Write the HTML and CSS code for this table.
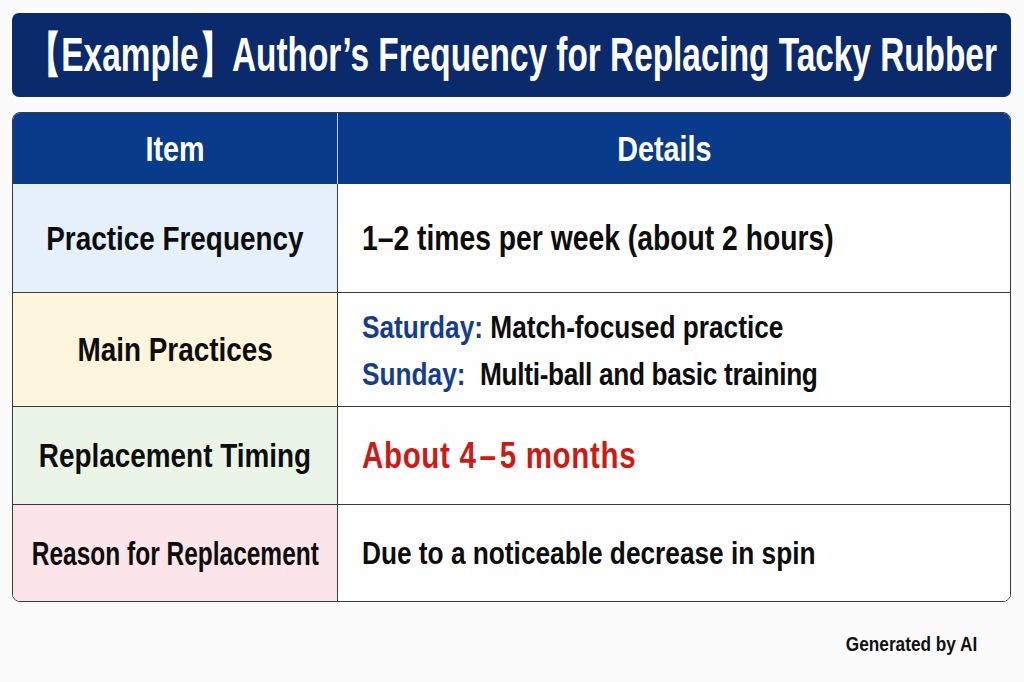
FILE: index.html
```html
<!DOCTYPE html>
<html lang="en">
<head>
<meta charset="utf-8">
<title>Author's Frequency for Replacing Tacky Rubber</title>
<link rel="stylesheet" href="styles.css">
</head>
<body>
<div class="page">
  <header class="title-bar">
    <h1 class="title"><span class="nx nx-left title-text">【Example】Author’s Frequency for Replacing Tacky Rubber</span></h1>
  </header>
  <div class="table">
    <div class="cell head head-left"><span class="nx">Item</span></div>
    <div class="cell head head-right"><span class="nx">Details</span></div>

    <div class="cell label row-blue"><span class="nx">Practice Frequency</span></div>
    <div class="cell detail detail-freq"><span class="nx nx-left">1–2 times per week (about 2 hours)</span></div>

    <div class="cell label row-yellow"><span class="nx">Main Practices</span></div>
    <div class="cell detail detail-lines">
      <span class="nx nx-left line"><span class="day">Saturday:</span> Match-focused practice</span>
      <span class="nx nx-left line"><span class="day">Sunday:</span>&nbsp; <span class="tight">Multi-ball and basic training</span></span>
    </div>

    <div class="cell label row-green"><span class="nx">Replacement Timing</span></div>
    <div class="cell detail detail-red"><span class="nx nx-left">About 4&#8202;–&#8202;5 months</span></div>

    <div class="cell label row-pink"><span class="nx nx-narrow">Reason for Replacement</span></div>
    <div class="cell detail detail-reason"><span class="nx nx-left">Due to a noticeable decrease in spin</span></div>
  </div>
  <footer class="footer"><span class="nx nx-right">Generated by AI</span></footer>
</div>
</body>
</html>
```

FILE: styles.css
```css
html, body {
  margin: 0;
  padding: 0;
  background: #fbfbfb;
}

body {
  font-family: "Liberation Sans", Arial, sans-serif;
  font-weight: bold;
  color: #111;
}

/* condensed rendering of Liberation Sans to mimic a narrow bold face */
.nx {
  display: inline-block;
  white-space: nowrap;
  transform: scaleX(0.82);
  transform-origin: center center;
}

.nx-left {
  transform-origin: left center;
}

.nx-right {
  transform-origin: right center;
}

.nx-narrow {
  transform: scaleX(0.72);
}

.page {
  width: 1024px;
  height: 682px;
  padding: 13px 13px 0 12px;
  box-sizing: border-box;
  display: flex;
  flex-direction: column;
  overflow: hidden;
}

.title-bar {
  height: 84px;
  background: #0b2a6c;
  border-radius: 7px;
  display: flex;
  align-items: center;
  padding-left: 16px;
  box-sizing: border-box;
  overflow: hidden;
}

.title {
  margin: 0;
  color: #fff;
  font-size: 48px;
  font-weight: bold;
  white-space: nowrap;
}

.title-text {
  transform: scaleX(0.695);
}

.table {
  margin-top: 15px;
  display: grid;
  grid-template-columns: 325px 1fr;
  grid-template-rows: 71px 108px 114px 98px 97px;
  border: 1.5px solid #3a3a3a;
  border-radius: 8px;
  overflow: hidden;
  background: #fff;
}

.cell {
  display: flex;
  align-items: center;
  box-sizing: border-box;
  min-width: 0;
}

.head {
  background: #0a3a8a;
  color: #fff;
  font-size: 35px;
  justify-content: center;
}

.head-left {
  border-right: 1.5px solid #c9d3e6;
}

.head-right {
  padding-right: 20px;
}

.label {
  justify-content: center;
  font-size: 34px;
  border-right: 1.5px solid #3a3a3a;
  border-top: 1.5px solid #3a3a3a;
  color: #0d0d0d;
}

.head + .head + .label {
  border-top: none;
}

.row-blue { background: #e6f0fb; }
.row-yellow { background: #fdf5dc; }
.row-green { background: #ebf5e7; }
.row-pink { background: #fbe5e8; }

.detail {
  padding-left: 24px;
  font-size: 32px;
  border-top: 1.5px solid #3a3a3a;
  background: #fefefe;
  color: #0d0d0d;
}

.label.row-blue + .detail {
  border-top: none;
}

.detail-freq {
  font-size: 34.5px;
}

.detail-lines {
  flex-direction: column;
  align-items: flex-start;
  justify-content: center;
  gap: 10px;
  font-size: 32px;
  padding-top: 2px;
}

.tight {
  letter-spacing: -0.4px;
}

.day {
  color: #163d8c;
}

.detail-red {
  color: #cc1b16;
  font-size: 36px;
  letter-spacing: 0.8px;
}

.detail-reason {
  font-size: 32px;
}

.footer {
  margin-top: 30px;
  align-self: flex-end;
  margin-right: 34px;
  font-size: 21px;
  color: #111;
}
```
